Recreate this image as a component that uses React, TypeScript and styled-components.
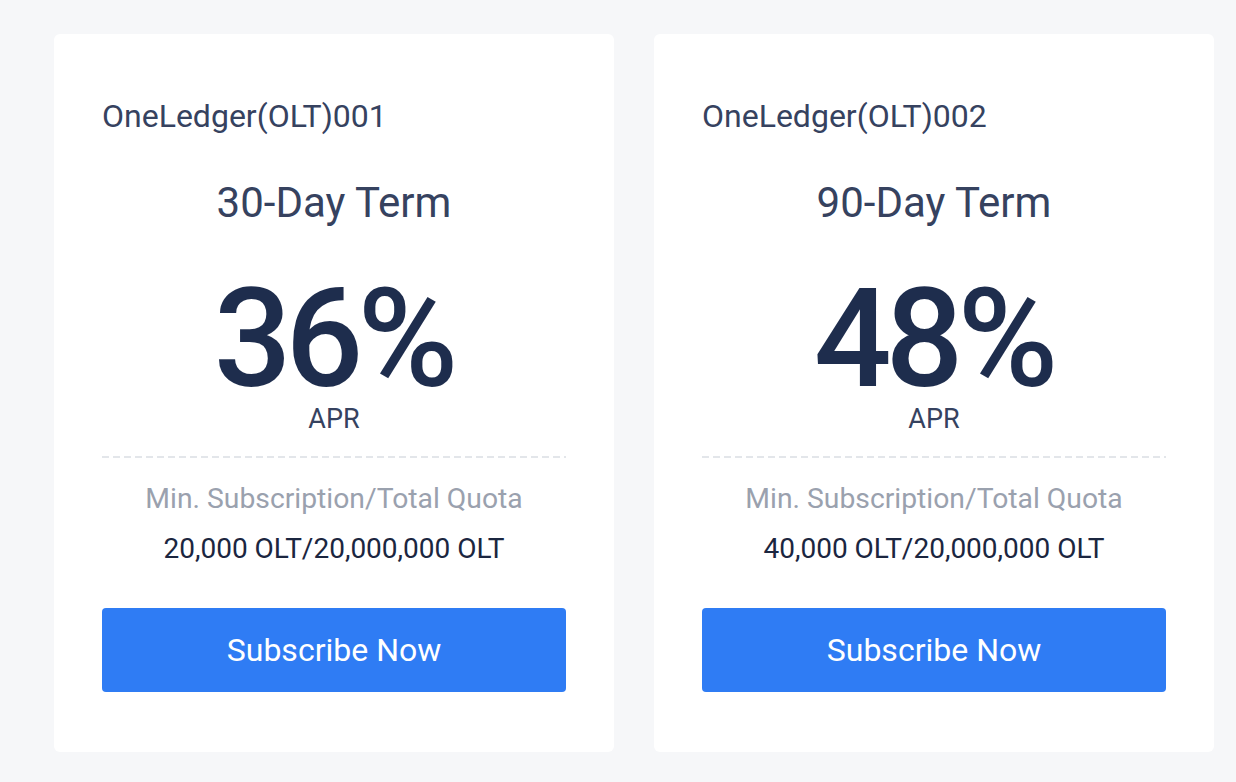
import React from "react";
import styled, { createGlobalStyle } from "styled-components";

const Global = createGlobalStyle`
  html, body { margin: 0; padding: 0; background: #f6f7f9; }
  body { font-family: Roboto, "Liberation Sans", Arial, sans-serif; }
`;

const Page = styled.div`
  display: flex;
  gap: 40px;
  padding: 34px 0 0 54px;
  min-height: 782px;
  box-sizing: border-box;
`;

const Card = styled.div`
  width: 560px;
  height: 718px;
  box-sizing: border-box;
  background: #ffffff;
  border-radius: 6px;
  padding: 63px 48px 0;
  display: flex;
  flex-direction: column;
`;

const Title = styled.div`
  font-size: 32px;
  line-height: 38px;
  color: #36425f;
  font-weight: 400;
`;

const Term = styled.div`
  margin-top: 43px;
  text-align: center;
  font-size: 42px;
  line-height: 50px;
  color: #36425f;
`;

const Rate = styled.div`
  margin-top: 48px;
  text-align: center;
  font-size: 137px;
  line-height: 126px;
  font-weight: 500;
  color: #1e2d4d;
  letter-spacing: -6px;
  padding-right: 2px;
`;

const RateLabel = styled.div`
  margin-top: 1px;
  text-align: center;
  font-size: 27px;
  line-height: 32px;
  color: #36425f;
`;

const Divider = styled.div`
  margin-top: 21px;
  height: 2px;
  background: repeating-linear-gradient(
    to right,
    #e3e6ea 0 7px,
    transparent 7px 11px
  );
`;

const QuotaLabel = styled.div`
  margin-top: 24px;
  text-align: center;
  font-size: 28.3px;
  line-height: 34px;
  color: #9aa1ae;
`;

const QuotaValue = styled.div`
  margin-top: 16px;
  text-align: center;
  font-size: 28px;
  line-height: 34px;
  color: #1b2640;
`;

const Button = styled.button`
  margin-top: 42px;
  height: 84px;
  width: 100%;
  border: none;
  border-radius: 4px;
  background: #2f7cf4;
  color: #ffffff;
  font-family: inherit;
  font-size: 32px;
  cursor: pointer;
`;

const plans = [
  { name: "OneLedger(OLT)001", term: "30-Day Term", rate: "36%", quota: "20,000 OLT/20,000,000 OLT" },
  { name: "OneLedger(OLT)002", term: "90-Day Term", rate: "48%", quota: "40,000 OLT/20,000,000 OLT" },
];

export default function App() {
  return (
    <>
      <Global />
      <Page>
        {plans.map((p) => (
          <Card key={p.name}>
            <Title>{p.name}</Title>
            <Term>{p.term}</Term>
            <Rate>{p.rate}</Rate>
            <RateLabel>APR</RateLabel>
            <Divider />
            <QuotaLabel>Min. Subscription/Total Quota</QuotaLabel>
            <QuotaValue>{p.quota}</QuotaValue>
            <Button>Subscribe Now</Button>
          </Card>
        ))}
      </Page>
    </>
  );
}
